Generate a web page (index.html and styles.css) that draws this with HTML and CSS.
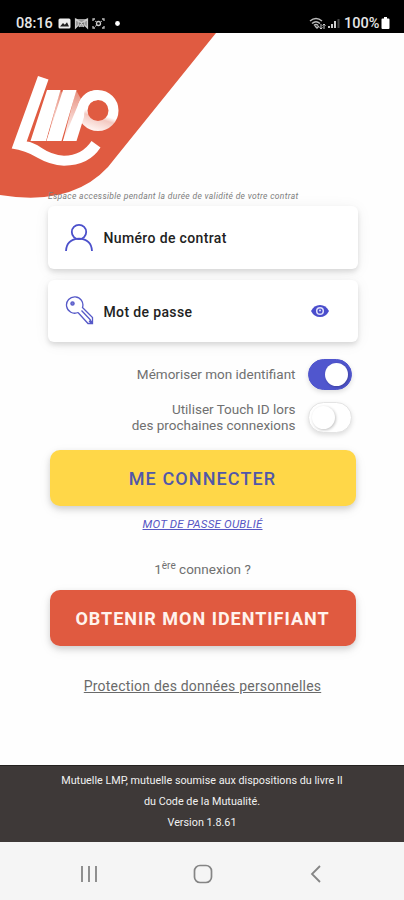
FILE: index.html
```
<!DOCTYPE html>
<html lang="fr">
<head>
<meta charset="utf-8">
<title>LMP</title>
<link rel="stylesheet" href="styles.css">
</head>
<body>
<header class="status">
  <span class="clock">08:16</span>
  <svg class="status-left" width="66" height="14" viewBox="0 0 66 14">
    <rect x="1.500" y="2.500" width="12" height="10" rx="1.500" fill="#eee"/>
    <path d="M3 10.500l3-3.500 1.800 1.700 2.200-2.500 2 4.300z" fill="#222"/>
    <path d="M18.500 3v9L22 8.500V6ZM30.500 3v9L27 8.500V6ZM19 3l5.500 4L30 3M22 11l2.500-4 2.500 4" fill="#999" stroke="#ccc" stroke-width="1.200"/>
    <path d="M36 5V3h2M45 3h2v2M47 10v2h-2M38 12h-2v-2" fill="none" stroke="#bbb" stroke-width="1.300"/>
    <circle cx="41.500" cy="7.500" r="2" fill="none" stroke="#ccc" stroke-width="1.300"/>
    <path d="M38 5l2 1.500M38 10.500L40 9M45 5l-2 1.500" stroke="#aaa"/>
    <circle cx="60.500" cy="7.500" r="2.400" fill="#fff"/>
  </svg>
  <svg class="status-right" width="34" height="14" viewBox="0 0 34 14">
    <g fill="none" stroke="#bbb" stroke-width="1.500"><path d="M1 5q6-5 12 0M3 7.500q4-3.500 8 0M5 9.500q2-2 4 0"/><path d="M6 10l2 2 2-2"/></g>
    <path d="M12 8v5M10.500 11.500L12 13l1.500-1.500M15 13V8M13.500 9.500L15 8l1.500 1.500" stroke="#ccc" fill="none"/>
    <path d="M20 12v-2M23 12V8M26 12V5" stroke="#ccc" stroke-width="2"/>
    <path d="M29.500 12V3" stroke="#444" stroke-width="2"/>
  </svg>
  <span class="percent">100%</span>
  <svg width="9" height="14" viewBox="0 0 9 14"><path d="M3 1h3v1.500h1.500q1 0 1 1V12q0 1-1 1h-6q-1 0-1-1V3.500q0-1 1-1H3z" fill="#fff"/></svg>
</header>
<main class="screen">
  <svg class="brand" width="220" height="168" viewBox="0 33 220 168" role="img" aria-label="LMP">
    <defs>
      <linearGradient id="fold" x1="0" y1="0" x2="0" y2="1"><stop offset="0" stop-color="#e68c7a"/><stop offset=".5" stop-color="#f5cbc3"/><stop offset="1" stop-color="#fff"/></linearGradient>
      <linearGradient id="ring" gradientUnits="userSpaceOnUse" x1="103" y1="110" x2="96" y2="131"><stop offset=".22" stop-color="#fff"/><stop offset=".42" stop-color="#f3c9c1"/><stop offset="1" stop-color="#fff3f0"/></linearGradient>
    </defs>
    <path d="M0 33H216L116 157Q80 208 0 195Z" fill="#e05b41"/>
    <path d="M38 76L48.500 79.500 26.700 141.500Q33 142 41.700 148Q52 155 64 155.800Q82 155.500 91.500 141L100.500 147.500Q89 165.500 64 165.700Q50 165 38 158Q25 150 11.700 148.500Z" fill="#fff"/>
    <path d="M60 90L63 94 58 141H47Z" fill="url(#fold)"/>
    <path d="M76 90L81 99 74 141H63Z" fill="url(#fold)"/>
    <path d="M47 90H60.500L46 141H30.500ZM63 90H76.500L61.500 141H46.500Z" fill="#fff"/>
    <circle cx="98" cy="110.500" r="15.500" fill="none" stroke="url(#ring)" stroke-width="10"/>
    <path d="M98 90Q83 90 78 105L63 141H76.500L84 117Q84 101 98 100Z" fill="#fff"/>
  </svg>
  <p class="notice">Espace accessible pendant la durée de validité de votre contrat</p>
  <form class="login">
    <div class="field">
      <svg width="30" height="30" viewBox="0 0 30 30" fill="none" stroke="#4b50cb" stroke-width="1.800"><circle cx="14" cy="9" r="7.200"/><path d="M1 28Q1.500 16.200 14 15.600Q26.500 16.200 27 28"/></svg>
      <span class="label">Numéro de contrat</span>
    </div>
    <div class="field">
      <svg width="30" height="30" viewBox="0 0 30 30" fill="none" stroke="#5659c8" stroke-width="1.300"><path d="M13 16.500A8.200 8.200 0 1 1 17.500 11.500L27.500 21.500V27.500H23L13 16.500M16.500 14.500L25.500 24"/><circle cx="7.500" cy="7.500" r="1.600" fill="#7b7dd8"/><path d="M24.500 24.500l2.500 2.500" stroke-width="2.500"/></svg>
      <span class="label">Mot de passe</span>
      <svg class="eye" width="18" height="14" viewBox="0 0 18 14"><path d="M0 7Q3 1 9 1T18 7Q15 13 9 13T0 7Z" fill="#4a4dcc"/><circle cx="9" cy="7" r="3.300" fill="#4a4dcc" stroke="#dedffb" stroke-width="1.500"/><circle cx="9" cy="6.500" r="1" fill="#dedffb"/></svg>
    </div>
    <div class="option"><span>Mémoriser mon identifiant</span><i class="switch on"></i></div>
    <div class="option option-touch"><span>Utiliser Touch ID lors<br>des prochaines connexions</span><i class="switch"></i></div>
    <button type="button" class="btn primary"><span>ME CONNECTER</span></button>
  </form>
  <a class="forgot">MOT DE PASSE OUBLIÉ</a>
  <p class="first">1<sup>ère</sup> connexion ?</p>
  <button type="button" class="btn secondary"><span>OBTENIR MON IDENTIFIANT</span></button>
  <a class="privacy">Protection des données personnelles</a>
</main>
<footer class="legal">
  <p>Mutuelle LMP, mutuelle soumise aux dispositions du livre II</p>
  <p>du Code de la Mutualité.</p>
  <p>Version 1.8.61</p>
</footer>
<nav class="nav">
  <svg width="18" height="18" viewBox="0 0 18 18" stroke="#858585" stroke-width="1.800"><path d="M2 1v16M9 1v16M16 1v16"/></svg>
  <svg width="20" height="20" viewBox="0 0 20 20"><rect x="1.500" y="1.500" width="17" height="17" rx="5.500" fill="none" stroke="#858585" stroke-width="1.700"/></svg>
  <svg width="18" height="18" viewBox="0 0 18 18"><path d="M13 1L5 9l8 8" fill="none" stroke="#858585" stroke-width="1.800"/></svg>
</nav>
</body>
</html>
```
FILE: styles.css
```
* { box-sizing: border-box; }
body {
  margin: 0;
  width: 404px;
  height: 900px;
  display: flex;
  flex-direction: column;
  overflow: hidden;
  background: #fefefe;
  font-family: Roboto, "Liberation Sans", sans-serif;
}
p { margin: 0; }
svg { flex: none; display: block; }
.status {
  height: 33px;
  flex: none;
  display: flex;
  align-items: flex-end;
  padding: 0 14px 3px 16px;
  background: #000;
  color: #e6e6e6;
  font-size: 14.5px;
  font-weight: 500;
  line-height: 12px;
}
.status span { line-height: 13px; }
.clock { width: 41px; white-space: nowrap; }
.status-right { margin-left: auto; }
.percent { width: 36px; margin: 0 1px; white-space: nowrap; }
.screen {
  position: relative;
  height: 732px;
  flex: none;
  display: flex;
  flex-direction: column;
  align-items: center;
  padding: 157px 0 0 1px;
}
.brand { position: absolute; left: 0; top: 0; }
.notice {
  position: relative;
  width: 309px;
  height: 16px;
  color: #7d7d7d;
  font-size: 8.5px;
  line-height: 12px;
  letter-spacing: .32px;
  font-style: italic;
  white-space: nowrap;
}
.login { width: 310px; }
.field {
  position: relative;
  display: flex;
  align-items: center;
  height: 63px;
  margin-bottom: 11px;
  padding: 0 29px 0 17px;
  border-radius: 6px;
  background: #fff;
  box-shadow: 0 3px 5px rgba(0,0,0,.12), 0 2px 16px rgba(0,0,0,.06);
}
.field + .field { height: 62px; }
.label {
  margin-left: 9px;
  padding-top: 1px;
  color: #222;
  font-size: 14px;
  font-weight: 500;
  letter-spacing: .36px;
}
.eye { margin-left: auto; }
.option {
  display: flex;
  align-items: center;
  justify-content: flex-end;
  gap: 12px;
  height: 32px;
  margin: 16px 6px 0 0;
  color: #707070;
  font-size: 13.5px;
  line-height: 16px;
  text-align: right;
  white-space: nowrap;
}
.option-touch { margin-top: 11px; }
.switch {
  width: 44px;
  height: 31px;
  padding: 3px;
  border: 1px solid #e4e4e4;
  border-radius: 16px;
  background: #fff;
  box-shadow: 0 2px 5px rgba(0,0,0,.13);
}
.switch::after {
  content: "";
  display: block;
  width: 23px;
  height: 23px;
  border-radius: 50%;
  background: #fff;
  box-shadow: 1px 1px 3px rgba(0,0,0,.24);
}
.on { background: #5056ce; border-color: #5056ce; }
.on::after { margin-left: 13px; }
.btn {
  display: flex;
  align-items: center;
  justify-content: center;
  width: 306px;
  height: 56px;
  padding: 0;
  border: 0;
  border-radius: 10px;
  font-family: inherit;
  font-size: 18px;
  font-weight: 500;
  white-space: nowrap;
  box-shadow: 0 3px 6px rgba(0,0,0,.15), 0 4px 14px rgba(0,0,0,.06);
}
.primary { margin: 17px 0 0 2px; background: #ffd748; color: #5157a8; letter-spacing: 1.1px; }
.secondary { background: #e05a40; color: #fff3ed; font-weight: 700; letter-spacing: 1px; }
.forgot {
  margin-top: 10px;
  color: #5656c4;
  font-size: 11.5px;
  line-height: 16px;
  letter-spacing: .2px;
  font-style: italic;
  text-decoration: underline;
}
.first {
  height: 20px;
  margin: 27px 0 11px;
  color: #707070;
  font-size: 13.5px;
  line-height: 20px;
}
.first sup { font-size: 10px; line-height: 0; }
.privacy {
  margin-top: 31px;
  color: #6a6a6a;
  font-size: 14px;
  line-height: 18px;
  letter-spacing: .2px;
  text-decoration: underline;
}
.legal {
  height: 77px;
  flex: none;
  padding-top: 4px;
  background: #3e3938;
  border-top: 1px solid #24211f;
  color: #f1f1f1;
  text-align: center;
  font-size: 10.8px;
  line-height: 21.2px;
}
.nav {
  flex: 1;
  display: flex;
  align-items: center;
  justify-content: space-between;
  padding: 6px 79px 0 80px;
  background: #f5f5f5;
}
```
